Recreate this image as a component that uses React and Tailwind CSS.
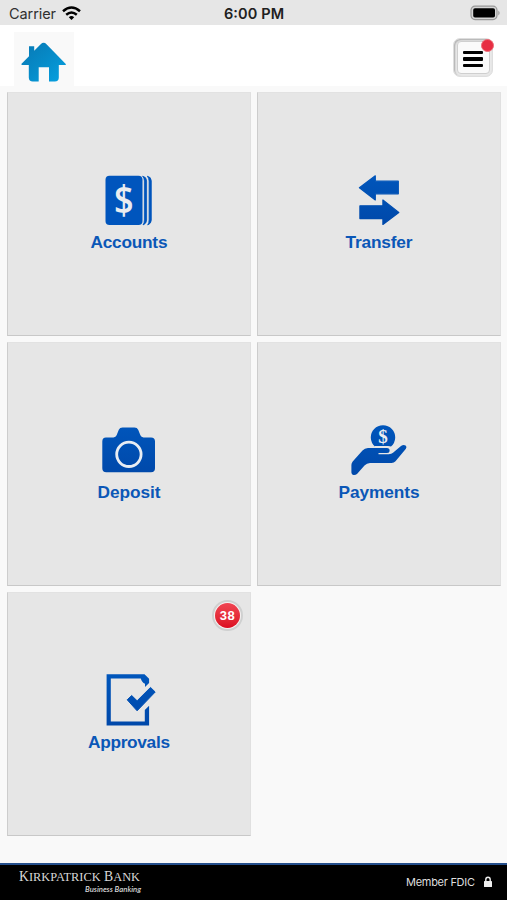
import React from "react";

// Gradient shared by all the tile icons
function BlueFill() {
  return (
    <defs>
      <linearGradient id="tileBlue" x1="0" y1="0" x2="0" y2="60" gradientUnits="userSpaceOnUse">
        <stop offset="0" stopColor="#0057bd" />
        <stop offset="1" stopColor="#0047a8" />
      </linearGradient>
    </defs>
  );
}

function AccountsIcon() {
  return (
    <svg width="60" height="60" viewBox="0 0 60 60">
      <rect x="6.5" y="5.8" width="37" height="49.3" rx="4" fill="#0055bd" />
      <path d="M43.6 6.2Q47.6 7 47.6 11V50Q47.6 53.5 44 55Q45.4 53 45.4 50V11Q45.4 8 43.6 6.2Z" fill="#0055bd" stroke="#0055bd" strokeWidth="0.8" />
      <path d="M48.3 6.2Q52.3 7 52.3 11V50Q52.3 53.5 48.7 55Q50.1 53 50.1 50V11Q50.1 8 48.3 6.2Z" fill="#0055bd" stroke="#0055bd" strokeWidth="0.8" />
      <text transform="translate(24.7 44) scale(0.88 1)" textAnchor="middle" fontSize="39" className="font-['Open_Sans',sans-serif] font-semibold" fill="#e9ecf0">$</text>
    </svg>
  );
}

function TransferIcon() {
  return (
    <svg width="60" height="60" viewBox="0 0 60 60" fill="url(#tileBlue)" stroke="url(#tileBlue)" strokeWidth="1.2" strokeLinejoin="round">
      <path d="M10.4 17.7L26.3 5.8V11.2H49.3V23.8H26.3V29.9Z" />
      <path d="M49.8 42.4L33.9 30V35.8H10.9V48.6H33.9V54.4Z" />
    </svg>
  );
}

function DepositIcon() {
  return (
    <svg width="60" height="60" viewBox="0 0 60 60" fill="url(#tileBlue)">
      <path d="M7 17.5H14.5Q16.8 17.3 17.6 15.2L19.8 9.8Q20.8 7.5 23.5 7.5H35.5Q38.2 7.5 39.2 9.8L41.4 15.2Q42.2 17.3 44.5 17.5H52Q56 17.5 56 21.5V48.3Q56 52.3 52 52.3H7.3Q3.3 52.3 3.3 48.3V21.5Q3.3 17.5 7 17.5Z" />
      <circle cx="29.9" cy="34.3" r="12.2" stroke="#e8edf3" strokeWidth="2.8" />
    </svg>
  );
}

function PaymentsIcon() {
  return (
    <svg width="60" height="60" viewBox="0 0 60 60" fill="url(#tileBlue)">
      <path d="M26 26.6A12.2 12.2 0 1 1 42 26.6Q41 25.9 39 25.9H26Z" />
      <text x="34" y="22.8" textAnchor="middle" fontSize="19" className="font-['Liberation_Serif',serif] font-bold" fill="#e9ecf0">$</text>
      <path d="M19 28H38Q40.6 28 40.6 30.5Q40.6 33 38 33H29.5V34.2H39.8Q42.5 34.2 44 32.8L52 26Q54.4 24.2 56.6 25.4Q58.2 26.8 56.9 28.7L46.5 41.2Q45 43 42.5 43H21Q17.8 43 15.5 45.6L8 53.9Q6.6 55.2 4.5 55Q2.5 54.9 2.4 52.5V45Q2.4 43 3.7 41.5L13.5 30.5Q15.7 28 19 28Z" />
    </svg>
  );
}

function ApprovalsIcon() {
  return (
    <svg width="60" height="60" viewBox="0 0 60 60" fill="url(#tileBlue)">
      <path d="M7.6 4.2H45.5L50.1 8.7V13L46 17V13.8Q42.8 12.6 41.8 8.6H11.8V51.4H45.8V40L50.1 35.7V55.6H7.6Z" />
      <path d="M28.2 29.8L32.7 25.5L38.1 30.8L51.5 17.4L56.2 22L38.1 40.8Z" stroke="url(#tileBlue)" strokeWidth="1" strokeLinejoin="round" />
    </svg>
  );
}

function HomeIcon() {
  return (
    <svg width="46" height="40" viewBox="0 0 46 40" className="ml-[7px] mt-[10px]">
      <defs>
        <linearGradient id="homeBlue" x1="0" y1="0" x2="1" y2="1">
          <stop offset="0" stopColor="#0878b4" />
          <stop offset="0.5" stopColor="#068bc8" />
          <stop offset="1" stopColor="#07a2e2" />
        </linearGradient>
      </defs>
      <path fill="url(#homeBlue)" d="M8 4.2H13.2V8.8L19.7 2.2Q22.6 -0.6 25.5 2.2L45 22.2L44.5 23H37.8V35.5Q37.8 39.5 33.8 39.5H28V25.3H17.7V39.5H11.8Q7.8 39.5 7.8 35.5V23H0.8L0.3 22L8 14.2Z" />
    </svg>
  );
}

const tiles = [
  { label: "Accounts", icon: AccountsIcon, width: 77 },
  { label: "Transfer", icon: TransferIcon, width: 67 },
  { label: "Deposit", icon: DepositIcon, width: 63 },
  { label: "Payments", icon: PaymentsIcon, width: 81 },
  { label: "Approvals", icon: ApprovalsIcon, width: 82, badge: 38 },
];

function Tile({ label, icon: Icon, width, badge }) {
  return (
    <div className="relative flex h-[244px] flex-col items-center border border-t-[#e2e2e2] border-r-[#e0e0e0] border-b-[#c8c8c8] border-l-[#cdcdcd] bg-[#e6e6e6] pt-[77px]">
      <Icon />
      <svg width="100" height="24" className="overflow-visible">
        <text x="50" y="18.4" textAnchor="middle" textLength={width} fontSize="17.3" className="font-bold" fill="#0b57b7">
          {label}
        </text>
      </svg>
      {badge && (
        <span className="absolute right-[7px] top-[7px] flex h-[31px] w-[31px] items-center justify-center rounded-full border-2 border-[#cfd0d0] bg-[#f6f0f0]">
          <span className="flex h-[25px] w-[25px] items-center justify-center rounded-full bg-linear-to-b from-[#f04452] to-[#dc0820] text-[13px] font-bold tracking-[0.5px] text-white">
            {badge}
          </span>
        </span>
      )}
    </div>
  );
}

function StatusBar() {
  return (
    <div className="flex h-[25px] items-center justify-between bg-[#e6e6e6] pl-[9px] pr-[7px] text-[#222]">
      <div className="flex w-[149px] items-center gap-[6px]">
        <svg width="47" height="20">
          <text x="0" y="16" fontSize="14.5" textLength="47" fill="#303030" className="font-['Inter',sans-serif]">Carrier</text>
        </svg>
        <svg width="19" height="15" viewBox="0 0 19 15" fill="none" stroke="#000" strokeWidth="2.5" className="mt-px">
          <path d="M1 5.2Q9.5 -2.2 18 5.2" />
          <path d="M4.2 8.7Q9.5 4.2 14.8 8.7" />
          <path d="M6.8 11.2Q9.5 9 12.2 11.2L9.5 14Z" fill="#000" stroke="none" />
        </svg>
      </div>
      <svg width="61" height="20">
        <text x="0" y="16" fontSize="14.5" textLength="60" fill="#202020" className="font-['Inter',sans-serif] font-semibold">6:00 PM</text>
      </svg>
      <div className="flex w-[150px] justify-end">
        <svg width="30" height="16" viewBox="0 0 30 16">
          <rect x="1" y="1.2" width="26" height="13.4" rx="4" fill="#d5d5d5" stroke="#989898" strokeWidth="1.2" />
          <rect x="3.2" y="3.2" width="21.8" height="9.4" rx="1.8" fill="#000" />
          <path d="M28.3 5.4Q31 8 28.3 10.4Z" fill="#999" />
        </svg>
      </div>
    </div>
  );
}

function Header() {
  return (
    <header className="flex h-[61px] justify-between bg-white pl-[14px] pr-[14px]">
      <div className="mt-[7px] h-[54px] w-[60px] bg-[#f9f9f9]">
        <HomeIcon />
      </div>
      <button className="relative mt-[13px] flex h-[39px] w-[40px] items-center justify-center rounded-[7px] border border-[#dedede] bg-[#e9e9e9] shadow-[inset_1px_1px_2px_#aaa]">
        <span className="flex h-[33px] w-[33px] flex-col items-center justify-center gap-[3px] rounded-[4px] border border-[#cfcfcf] bg-[#fafafa] pt-[3px]">
          <span className="h-[3.5px] w-[20px] rounded-[1px] bg-black" />
          <span className="h-[3.5px] w-[20px] rounded-[1px] bg-black" />
          <span className="h-[3.5px] w-[20px] rounded-[1px] bg-black" />
        </span>
        {/* Unread marker */}
        <span className="absolute top-0 right-[-2px] h-[13px] w-[13px] rounded-full border border-[#ed6b76] bg-[#e72e43]" />
      </button>
    </header>
  );
}

function Footer() {
  return (
    <footer className="flex h-[37px] justify-between border-t-2 border-[#254f8c] bg-black pl-[19px] pr-[14px]">
      <svg width="126" height="35" fill="#d8d8d8">
        <text x="0" y="16" fontSize="15" textLength="121" lengthAdjust="spacingAndGlyphs" className="font-['Liberation_Serif',serif]">
          K<tspan fontSize="13.5">IRKPATRICK</tspan> B<tspan fontSize="13.5">ANK</tspan>
        </text>
        <text x="66" y="27" fontSize="7.8" textLength="56" lengthAdjust="spacingAndGlyphs" className="font-['Lato',sans-serif] font-semibold italic">
          Business Banking
        </text>
      </svg>
      <div className="flex h-[33px] items-center gap-[7px]">
        <svg width="70" height="20">
          <text x="0" y="14" fontSize="11" textLength="69" fill="#dedede" className="font-['Inter',sans-serif]">Member FDIC</text>
        </svg>
        <svg width="10" height="12" viewBox="0 0 10 12">
          <rect x="1" y="5" width="8" height="6" rx="0.6" fill="#eee" />
          <path d="M2.8 5.5V3.6Q2.8 1.3 5 1.3Q7.2 1.3 7.2 3.6V5.5" fill="none" stroke="#eee" strokeWidth="1.4" />
        </svg>
      </div>
    </footer>
  );
}

export default function App() {
  return (
    <div className="flex h-[900px] w-[507px] flex-col overflow-hidden bg-[#f9f9f9] font-['Liberation_Sans',sans-serif]">
      <svg width="0" height="0" className="absolute">
        <BlueFill />
      </svg>
      <StatusBar />
      <Header />
      <main className="grid flex-1 grid-cols-[244px_244px] content-start gap-[6px] pl-[7px] pt-[6px]">
        {tiles.map((tile) => (
          <Tile key={tile.label} {...tile} />
        ))}
      </main>
      <Footer />
    </div>
  );
}
